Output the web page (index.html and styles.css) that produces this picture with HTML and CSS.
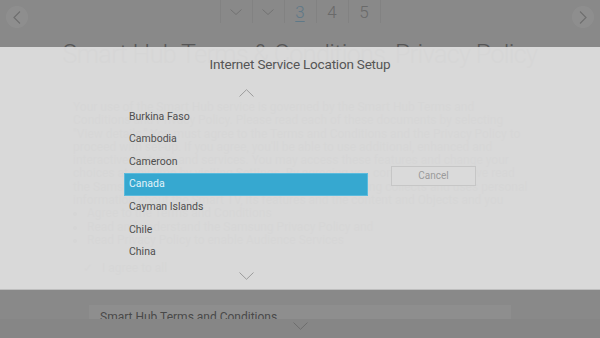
FILE: index.html
```html
<!DOCTYPE html>
<html lang="en">
<head>
    <meta charset="UTF-8">
    <meta name="viewport" content="width=device-width, initial-scale=1.0">
    <title>Smart Hub Terms &amp; Conditions, Privacy Policy</title>
    <link rel="stylesheet" href="styles.css">
</head>
<body>
    <div class="page">
        <header class="topbar">
            <span class="nav-arrow"><svg width="8" height="13" viewBox="0 0 8 13"><polyline points="7,0.5 1,6.5 7,12.5"/></svg></span>
            <ol class="steps">
                <li><svg width="12" height="6" viewBox="0 0 12 6"><polyline points="0.5,0.5 6,5.5 11.5,0.5"/></svg></li>
                <li><svg width="12" height="6" viewBox="0 0 12 6"><polyline points="0.5,0.5 6,5.5 11.5,0.5"/></svg></li>
                <li class="current">3</li>
                <li>4</li>
                <li>5</li>
            </ol>
            <span class="nav-arrow"><svg width="8" height="13" viewBox="0 0 8 13"><polyline points="1,0.5 7,6.5 1,12.5"/></svg></span>
        </header>

        <h1 class="page-title">Smart Hub Terms &amp; Conditions, Privacy Policy</h1>

        <div class="terms-text">
            <p>Your use of the Smart Hub service is governed by the Smart Hub Terms and Conditions and Privacy Policy. Please read each of these documents by selecting "View details." You must agree to the Terms and Conditions and the Privacy Policy to proceed with set-up. If you agree, you'll be able to use additional, enhanced and interactive features and services. You may access these features and change your choices at any time by visiting Settings. By agreeing you confirm that you have read the Samsung Privacy Policy, which explains how Samsung collects and uses personal information about the Smart TV, its features and the content and Objects and you</p>
            <ul>
                <li>Agree to the Terms and Conditions</li>
                <li>Read and understand the Samsung Privacy Policy and</li>
                <li>Read Privacy Policy to enable Audience Services</li>
            </ul>
            <div class="agree-row">
                <span class="agree-check">&#10003;</span> I agree to all
            </div>
        </div>

        <div class="terms-list">
            <div class="terms-item">Smart Hub Terms and Conditions</div>
        </div>

        <div class="scroll-bar">
            <svg width="15" height="8" viewBox="0 0 15 8"><polyline points="0.5,0.5 7.5,7.3 14.5,0.5"/></svg>
        </div>
    </div>

    <div class="dim"></div>

    <div class="popup">
        <h2 class="popup-title">Internet Service Location Setup</h2>
        <div class="popup-body">
            <div class="country-picker">
                <svg class="chevron" width="15" height="8" viewBox="0 0 15 8"><polyline points="0.5,7.5 7.5,0.7 14.5,7.5"/></svg>
                <ul class="country-list">
                    <li>Burkina Faso</li>
                    <li>Cambodia</li>
                    <li>Cameroon</li>
                    <li class="selected">Canada</li>
                    <li>Cayman Islands</li>
                    <li>Chile</li>
                    <li>China</li>
                </ul>
                <svg class="chevron" width="15" height="8" viewBox="0 0 15 8"><polyline points="0.5,0.5 7.5,7.3 14.5,0.5"/></svg>
            </div>
            <div class="popup-actions">
                <button class="btn-cancel">Cancel</button>
            </div>
        </div>
    </div>
</body>
</html>
```

FILE: styles.css
```css
body { margin: 0; width: 600px; height: 338px; overflow: hidden; position: relative; font-family: Roboto, "Liberation Sans", Arial, sans-serif; background-color: #dddddd; }

/* page behind the popup (gets dimmed) */
.page { height: 338px; display: flex; flex-direction: column; }
.topbar { height: 34px; display: flex; justify-content: space-between; align-items: flex-start; padding: 0 6px; }
.nav-arrow { width: 22px; height: 22px; margin-top: 6px; border-radius: 50%; background-color: #e6e6e6; display: flex; align-items: center; justify-content: center; }
.nav-arrow svg polyline { fill: none; stroke: #b3b3b3; stroke-width: 1.2; }
.steps { list-style: none; margin: 0; padding: 0; display: flex; }
.steps li { width: 31px; height: 23px; border-left: 1px solid #d2d2d2; display: flex; align-items: center; justify-content: center; font-size: 17px; font-weight: 300; color: #ababab; }
.steps li:last-child { border-right: 1px solid #d2d2d2; }
.steps li svg polyline { fill: none; stroke: #b8b8b8; stroke-width: 1; }
.steps li.current { color: #9ac3db; text-decoration: underline; text-underline-offset: 3px; text-decoration-thickness: 1px; }
.page-title { margin: 4px 0 0; font-size: 25px; line-height: 34px; font-weight: 300; letter-spacing: -0.6px; text-align: center; color: #8c8c8c; }
.terms-text { margin-top: 29px; padding: 0 70px 0 73px; font-size: 12px; line-height: 13.3px; color: #9a9a9a; }
.terms-text p { margin: 0; }
.terms-text ul { margin: 0; padding-left: 14px; }
.agree-row { margin-top: 15px; padding-left: 10px; }
.agree-check { margin-right: 6px; }
.terms-list { margin: 29px 89px 0; height: 14px; overflow: hidden; background-color: #e6e6e6; }
.terms-item { padding: 5px 11px 0; font-size: 12px; color: #777777; }
.scroll-bar { flex: 1; display: flex; justify-content: center; align-items: flex-start; padding-top: 3px; background-color: #d9d9d9; }
.scroll-bar svg polyline { fill: none; stroke: #b0b0b0; stroke-width: 1; }

.dim { position: absolute; top: 0; left: 0; right: 0; bottom: 0; background-color: rgba(0,0,0,0.38); }

/* location popup */
.popup { position: absolute; top: 47px; left: 0; width: 600px; height: 242px; background-color: rgba(221,221,221,0.945); border-bottom: 1px solid rgba(0,0,0,0.12); }
.popup-title { margin: 9px 0 0; font-size: 13.5px; line-height: 16px; font-weight: 400; letter-spacing: -0.2px; text-align: center; color: #555555; }
.popup-body { display: flex; justify-content: center; gap: 23px; margin-top: 17px; }
.country-picker { width: 244px; display: flex; flex-direction: column; align-items: center; }
.chevron polyline { fill: none; stroke: #9c9c9c; stroke-width: 1; }
.country-list { list-style: none; margin: 8.5px 0 7.6px; padding: 0; width: 100%; }
.country-list li { height: 22.67px; line-height: 22.67px; padding-left: 5px; box-sizing: border-box; font-size: 10.5px; color: #4e4e4e; }
.country-list li.selected { background-color: #36a8d0; border: 1px solid #5bbadc; line-height: 20.67px; padding-left: 4px; color: #e2f3f9; }
.popup-actions { width: 85px; padding-top: 75px; }
.btn-cancel { width: 85px; height: 20px; padding: 0; border: 1px solid #c6c6c6; background-color: #dadada; font-family: inherit; font-size: 10px; color: #9b9b9b; }
```
